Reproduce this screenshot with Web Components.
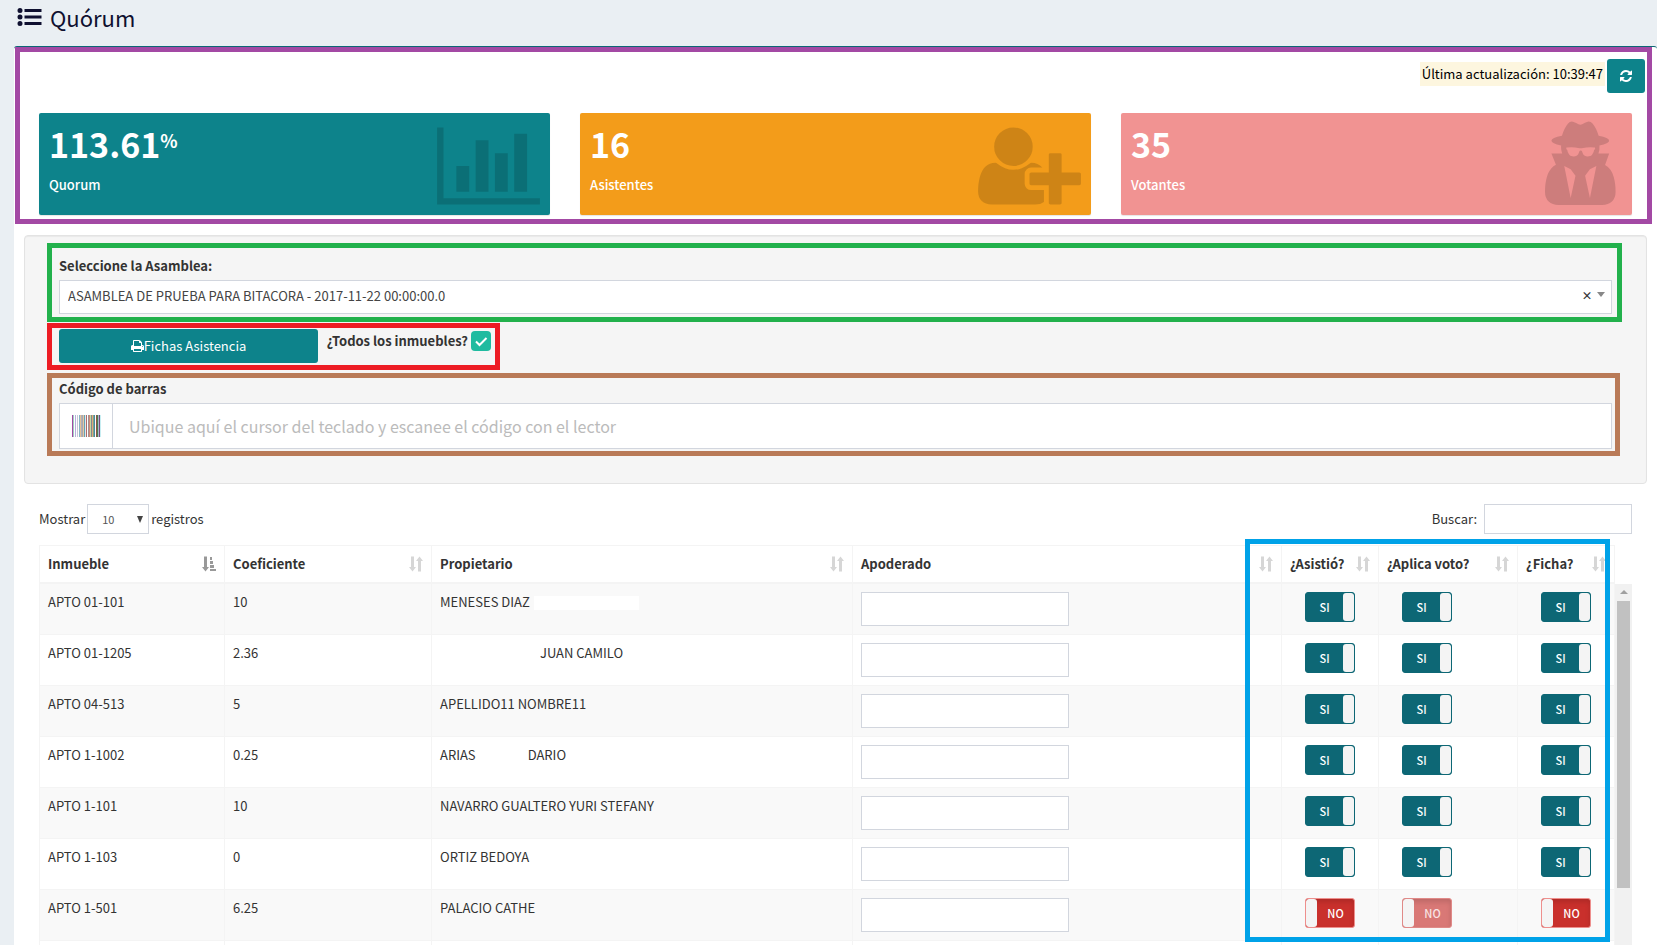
<!DOCTYPE html>
<html lang="es">
<head>
<meta charset="utf-8">
<meta name="viewport" content="width=device-width, initial-scale=1">
<title>Quórum</title>
<style>
  body {
    margin: 0;
    background: #eaeff3;
    color: #333;
    font: 13px/20px "Noto Sans CJK SC", "Source Sans Pro", sans-serif;
  }
</style>
</head>
<body>
<quorum-app></quorum-app>

<script>
const define = (name, html, setup) => {
  const template = document.createElement('template');
  template.innerHTML = html;
  customElements.define(name, class extends HTMLElement {
    constructor() {
      super();
      this.attachShadow({ mode: 'open' }).append(template.content.cloneNode(true));
    }
    connectedCallback() {
      if (setup && !this.ready) { this.ready = true; setup(this, this.shadowRoot); }
    }
  });
};

/* Icons: viewBox and path per name */
const ICONS = {
  chart: ['0 0 2048 1792', 'M640 896v512h-256v-512h256zm384-512v1024h-256v-1024h256zm1024 1152v128h-2048v-1536h128v1408h1920zm-640-896v768h-256v-768h256zm384-384v1152h-256v-1152h256z'],
  userplus: ['0 0 2048 1792', 'M704 896q-159 0-271.500-112.500t-112.500-271.500 112.500-271.500 271.500-112.500 271.500 112.500 112.500 271.500-112.500 271.500-271.500 112.500zm960 128h352q13 0 22.500 9.500t9.500 22.500v192q0 13-9.500 22.500t-22.500 9.500h-352v352q0 13-9.500 22.500t-22.500 9.500h-192q-13 0-22.500-9.500t-9.500-22.500v-352h-352q-13 0-22.500-9.500t-9.500-22.500v-192q0-13 9.500-22.500t22.500-9.500h352v-352q0-13 9.500-22.500t22.500-9.500h192q13 0 22.500 9.500t9.500 22.500v352zm-736 224q0 52 38 90t90 38h256v238q-68 50-171 50h-874q-121 0-194-69t-73-190q0-53 3.500-103.500t14-109 26.500-108.500 43-97.500 62-81 85.500-53.500 111.500-20q19 0 39 17 79 61 154.500 91.500t164.500 30.500 164.500-30.500 154.500-91.500q20-17 39-17 132 0 217 96h-223q-52 0-90 38t-38 90v192z'],
  secret: ['192 0 1536 1792', 'M704 1536l96-448-96-128-128-64zm384 0l128-640-128 64-96 128zm104-1001q-2-4-4-6-10-8-96-8-70 0-167 19-7 2-21 2t-21-2q-97-19-167-19-86 0-96 8-2 2-4 6 2 18 4 27 2 3 7.500 6.500t7.500 10.500q2 4 7.500 20.500t7 20.500 7.500 17 8.500 17 9 14 12 13.500 14 9.500 17.500 8 20.500 4 24.500 2q36 0 59-12.500t32.500-30 14.500-34.500 11.500-29.500 17.500-12.500h12q11 0 17.500 12.500t11.500 29.500 14.500 34.500 32.500 30 59 12.500q13 0 24.500-2t20.500-4 17.500-8 14-9.500 12-13.500 9-14 8.500-17 7.500-17 7-20.500 7.500-20.500q2-7 7.500-10.500t7.500-6.500q2-9 4-27zm408 879q0 121-73 190t-194 69h-874q-121 0-194-69t-73-190q0-61 4.500-118t19-125.500 37.500-123.500 63.500-103.500 93.500-74.500l-90-220h214q-22-64-22-128 0-12 2-32-194-40-194-96 0-57 210-99 17-62 51.500-134t70.500-114q32-37 76-37 30 0 84 31t84 31 84-31 84-31q44 0 76 37 36 42 70.500 114t51.500 134q210 42 210 99 0 56-194 96 7 81-20 160h214l-82 225q63 33 107.500 96.500t65.500 143.500 29 151.500 8 148.500z'],
  refresh: ['128 128 1536 1536', 'M1639 1056q0 5-1 7-64 268-268 434.500t-478 166.500q-146 0-282.500-55t-243.500-157l-129 129q-19 19-45 19t-45-19-19-45v-448q0-26 19-45t45-19h448q26 0 45 19t19 45-19 45l-137 137q71 66 161 102t187 36q134 0 250-65t186-179q11-17 53-117 8-23 30-23h192q13 0 22.500 9.500t9.500 22.500zm25-800v448q0 26-19 45t-45 19h-448q-26 0-45-19t-19-45 19-45l138-138q-148-137-349-137-134 0-250 65t-186 179q-11 17-53 117-8 23-30 23h-199q-13 0-22.500-9.500t-9.500-22.500v-7q65-268 270-434.500t480-166.500q146 0 284 55.500t245 156.500l130-129q19-19 45-19t45 19 19 45z'],
  print: ['64 128 1664 1536', 'M448 1536h896v-256h-896v256zm0-640h896v-384h-160q-40 0-68-28t-28-68v-160h-640v640zm1152 64q0-26-19-45t-45-19-45 19-19 45 19 45 45 19 45-19 19-45zm128 0v416q0 13-9.500 22.500t-22.500 9.500h-224v160q0 40-28 68t-68 28h-960q-40 0-68-28t-28-68v-160h-224q-13 0-22.500-9.500t-9.500-22.500v-416q0-79 56.500-135.500t135.500-56.500h64v-544q0-40 28-68t68-28h672q40 0 88 20t76 48l152 152q28 28 48 76t20 88v256h64q79 0 135.500 56.500t56.500 135.500z'],
  list: ['0 0 25 20', 'M3 1a2.500 2.500 0 1 1 0 5a2.500 2.500 0 1 1 0-5zM3 7.500a2.500 2.500 0 1 1 0 5a2.500 2.500 0 1 1 0-5zM3 14a2.500 2.500 0 1 1 0 5a2.500 2.500 0 1 1 0-5zM7.500 2h17v3h-17zM7.500 8.500h17v3h-17zM7.500 15h17v3h-17z'],
  sort: ['0 0 14 16', 'M2 0.500h3v10.500h2L3.500 15.500L0 11h2zM9 15.500h3V5h2L10.500 0.500L7 5h2z'],
  sortasc: ['0 0 14 16', 'M2 0.500h3v10.500h2L3.500 15.500L0 11h2zM8 1h2v3h-2zM8 5h3v3h-3zM8 9h4v3h-4zM8 13h6v2h-6z']
};
define('q-icon', `
<style>
  :host { display: inline-block; flex: none; }
  svg { display: block; width: 100%; height: 100%; fill: currentColor; }
</style>
<svg aria-hidden="true"><path/></svg>`, (host, root) => {
  const [box, d] = ICONS[host.getAttribute('name')];
  root.querySelector('svg').setAttribute('viewBox', box);
  root.querySelector('path').setAttribute('d', d);
});

/* Coloured frame that groups one area of the screen */
define('area-frame', `
<style>
  :host { display: block; box-sizing: border-box; border: 5px solid var(--frame, #a349a4); }
</style>
<slot></slot>`);

define('stat-card', `
<style>
  :host {
    display: flex; justify-content: space-between; align-items: flex-start;
    box-sizing: border-box; padding: 8px 10px 4px; border-radius: 2px;
    background: var(--tone); color: #fff; box-shadow: 0 1px 1px rgba(0,0,0,.1);
  }
  .value { margin: 2px 0 0; font-size: 34px; line-height: 42px; font-weight: 700; display: flex; }
  ::slotted(sup) { font-size: 18px; line-height: 34px; vertical-align: top; }
  p { margin: 9px 0 0; font-size: 13px; line-height: 22px; font-weight: 500; }
  q-icon { height: 90px; color: rgba(0,0,0,.15); }
</style>
<div><h3 class="value"><slot></slot></h3><p></p></div>`, (host, root) => {
  root.querySelector('p').textContent = host.getAttribute('label');
  const icon = document.createElement('q-icon');
  icon.setAttribute('name', host.getAttribute('icon'));
  icon.style.width = host.getAttribute('icon') === 'secret' ? '77px' : '103px';
  root.append(icon);
});

define('toggle-switch', `
<style>
  :host { display: block; width: 50px; }
  label {
    position: relative; display: flex; box-sizing: border-box; width: 50px; height: 30px;
    border: 1px solid #0d6775; border-radius: 3px; overflow: hidden;
    background: #0d6775; color: #fff; font-size: 11px; line-height: 28px; font-weight: 500;
  }
  input { position: absolute; inset: 0; width: 100%; height: 100%; margin: 0; opacity: 0; }
  span { flex: 1; text-align: center; }
  i { width: 11px; background: #f4f4f4; border-radius: 3px; }
  :host([off]) label { flex-direction: row-reverse; background: #c9302c; border-color: #ee8f8d; }
  :host([off]) label { box-shadow: inset 0 3px 5px rgba(0,0,0,.125); }
  :host([disabled]) label { background: #d97876; border-color: #e08a88; }
  :host([disabled]) span { color: #f8e4e4; }
</style>
<label><input type="checkbox" role="switch"><span></span><i></i></label>`, (host, root) => {
  const off = host.hasAttribute('off');
  root.querySelector('input').checked = !off;
  root.querySelector('input').disabled = host.hasAttribute('disabled');
  root.querySelector('span').textContent = off ? 'NO' : 'SI';
});

define('quorum-summary', `
<style>
  :host { display: block; }
  .update { display: flex; justify-content: flex-end; align-items: flex-start; gap: 2px; padding: 7px 2px 20px; }
  .time { margin-top: 3px; padding: 2px; background: #fdf6df; color: #000; line-height: 20px; }
  button {
    display: grid; place-items: center; width: 38px; height: 34px; padding: 0;
    border: 0; border-radius: 3px; background: #0d838b; color: #fff;
  }
  button q-icon { width: 12px; height: 12px; }
  .cards { display: grid; grid-template-columns: repeat(3, 1fr); gap: 30px; padding: 0 15px 4px 19px; }
</style>
<area-frame>
  <div class="update">
    <span class="time">Última actualización: 10:39:47</span>
    <button type="button" aria-label="Actualizar"><q-icon name="refresh"></q-icon></button>
  </div>
  <div class="cards">
    <stat-card style="--tone:#0d838b" label="Quorum" icon="chart">113.61<sup>%</sup></stat-card>
    <stat-card style="--tone:#f39c1a" label="Asistentes" icon="userplus">16</stat-card>
    <stat-card style="--tone:#f19392" label="Votantes" icon="secret">35</stat-card>
  </div>
</area-frame>`);

define('attendance-form', `
<style>
  :host {
    display: block; padding: 7px 24px 27px 22px; border: 1px solid #e3e3e3; border-radius: 4px;
    background: #f5f5f5; box-shadow: inset 0 1px 1px rgba(0,0,0,.05);
  }
  .assembly { --frame: #22b14c; padding: 7px 5px 3px 7px; margin-bottom: 1px; }
  .sheets { --frame: #ed1c24; display: flex; width: 453px; padding: 1px 4px 2px 7px; margin-bottom: 3px; }
  .barcode { --frame: #b97a57; padding: 0 3px 2px 7px; margin-right: 2px; }
  label { font-weight: 700; }
  .caption { display: block; line-height: 20px; padding: 1px 0 4px; }
  .select { display: flex; align-items: flex-start; height: 34px; box-sizing: border-box; padding: 0 6px 0 8px; border: 1px solid #d2d6de; background: #fff; }
  select {
    flex: 1; min-width: 0; height: 30px; padding: 0; border: 0; appearance: none;
    background: transparent; color: #444; font: inherit; line-height: 20px;
  }
  .clear { width: 20px; height: 28px; padding: 0; border: 0; background: none; color: #333; font: inherit; font-size: 11px; font-weight: 700; }
  .arrow { width: 8px; height: 5px; margin: 11px 0 0; color: #888; }
  .arrow svg { display: block; }
  .print {
    display: flex; align-items: center; justify-content: center; width: 259px; height: 34px;
    border: 0; border-radius: 3px; background: #0d838b; color: #fff; font: inherit; padding: 0;
  }
  .print q-icon { width: 13px; height: 12px; }
  .all { flex: 1; display: flex; gap: 3px; justify-content: flex-end; align-items: flex-start; padding-top: 2px; }
  .check { appearance: none; flex: none; width: 20px; height: 20px; margin: 0; border-radius: 4px;
    background: #1fbba0 url('data:image/svg+xml,<svg xmlns="http://www.w3.org/2000/svg" viewBox="0 0 20 20"><path d="M5 10.500l3.500 3.500L15.500 7" fill="none" stroke="white" stroke-width="2"/></svg>'); }
  .group { display: flex; height: 46px; box-sizing: border-box; border: 1px solid #d2d6de; background: #fff; }
  .addon { display: grid; place-items: center; width: 52px; border-right: 1px solid #d2d6de; }
  .group input { flex: 1; min-width: 0; border: 0; padding: 0 16px; background: none; font: inherit; font-size: 16px; outline: 0; }
  .group input::placeholder { color: #bbb; opacity: 1; }
</style>
<area-frame class="assembly">
  <label class="caption" for="assembly">Seleccione la Asamblea:</label>
  <div class="select">
    <select id="assembly"><option>ASAMBLEA DE PRUEBA PARA BITACORA - 2017-11-22 00:00:00.0</option></select>
    <button class="clear" type="button" aria-label="Quitar selección">×</button>
    <span class="arrow"><svg width="8" height="5" aria-hidden="true"><path d="M0 0h8L4 5z" fill="#888"/></svg></span>
  </div>
</area-frame>
<area-frame class="sheets">
  <button class="print" type="button"><q-icon name="print"></q-icon>Fichas Asistencia</button>
  <div class="all"><label for="all">¿Todos los inmuebles?</label><input class="check" id="all" type="checkbox" checked></div>
</area-frame>
<area-frame class="barcode">
  <label class="caption" for="code">Código de barras</label>
  <div class="group">
    <span class="addon"><svg width="29" height="22" aria-hidden="true"></svg></span>
    <input id="code" type="text" placeholder="Ubique aquí el cursor del teclado y escanee el código con el lector">
  </div>
</area-frame>`, (host, root) => {
  const bars = ['#a349a4', '#9fd0c0', '#fff', '#b7b0dd', '#fff', '#c8c8d8', '#fff', '#86b6c4', '#e2c29a', '#b0b0b8',
    '#a8a8b0', '#e6c8a0', '#6aa0b4', '#d8ecee', '#b06a6a', '#fff', '#a09090', '#d08a78', '#c4d8a0', '#808a90',
    '#e0a878', '#7aa890', '#4c88a0', '#fff', '#8a5a40', '#507a50', '#a8b8c8', '#7a4a80', '#c8eef2'];
  root.querySelector('.addon svg').innerHTML =
    bars.map((c, x) => `<rect x="${x}" width="1" height="22" fill="${c}"/>`).join('');
});

const ROWS = [
  ['APTO 01-101', '10', 'MENESES DIAZ<span class="blank"></span>'],
  ['APTO 01-1205', '2.36', '<span class="gap" style="width:100px"></span>JUAN CAMILO'],
  ['APTO 04-513', '5', 'APELLIDO11 NOMBRE11'],
  ['APTO 1-1002', '0.25', 'ARIAS<span class="gap" style="width:52px"></span>DARIO'],
  ['APTO 1-101', '10', 'NAVARRO GUALTERO YURI STEFANY'],
  ['APTO 1-103', '0', 'ORTIZ BEDOYA'],
  ['APTO 1-501', '6.25', 'PALACIO CATHE', 'off']
];
define('quorum-table', `
<style>
  :host { display: flex; flex-direction: column; min-height: 0; padding: 0 25px; }
  .tools { display: flex; justify-content: space-between; align-items: center; height: 30px; padding-bottom: 11px; }
  .tools label { display: flex; align-items: center; gap: 2px; }
  .tools .search { gap: 7px; }
  input[type=text], input[type=search], select {
    box-sizing: border-box; border: 1px solid #d2d6de; background: #fff; color: #555; font: inherit; border-radius: 0; appearance: none;
  }
  .search input { width: 148px; height: 30px; }
  .length span { display: grid; grid-template-columns: 62px; align-items: center; }
  select { grid-area: 1/1; width: 62px; height: 30px; padding: 0 14px; font-size: 11px; }
  .length svg { grid-area: 1/1; justify-self: end; margin-right: 6px; pointer-events: none; }
  .view { position: relative; flex: 1; display: flex; min-height: 0; overflow: clip; overflow-clip-margin: 10px; }
  table { flex: 1; align-self: flex-start; table-layout: fixed; border-collapse: separate; border-spacing: 0; border-left: 1px solid #f4f4f4; border-top: 1px solid #f4f4f4; }
  th, td { box-sizing: border-box; border-right: 1px solid #f4f4f4; border-bottom: 1px solid #f4f4f4; padding: 8px; text-align: left; vertical-align: top; }
  th { height: 38px; border-bottom-width: 2px; }
  th div { display: flex; justify-content: space-between; align-items: center; height: 20px; white-space: nowrap; }
  th q-icon { width: 14px; height: 16px; color: #d6d6d6; }
  th q-icon[name=sortasc] { color: #999; }
  td { height: 51px; }
  tbody tr:nth-child(odd) td { background: #f9f9f9; }
  td toggle-switch { margin-left: 15px; }
  td input { display: block; width: 208px; height: 34px; }
  .gap, .blank { display: inline-block; }
  .blank { width: 105px; height: 14px; margin-left: 4px; background: #fff; vertical-align: middle; }
  .bar { width: 17px; margin-top: 39px; padding-top: 6px; box-sizing: border-box; background: #f1f1f1; }
  .bar svg { display: block; margin: 0 auto 7px; }
  .bar i { display: block; width: 13px; height: 287px; margin: 0 auto; background: #c1c1c1; }
  .flags { position: absolute; top: -6px; right: 22px; width: 365px; height: 403px; pointer-events: none; --frame: #00a2e8; }
</style>
<div class="tools">
  <label class="length">Mostrar
    <span><select><option>10</option></select><svg width="6" height="7" aria-hidden="true"><path d="M0 0h6L3 7z" fill="#444"/></svg></span>
    registros</label>
  <label class="search">Buscar: <input type="search"></label>
</div>
<div class="view">
  <table>
    <colgroup><col style="width:185px"><col style="width:207px"><col style="width:421px"><col><col style="width:97px"><col style="width:139px"><col style="width:97px"></colgroup>
    <thead><tr></tr></thead>
    <tbody></tbody>
  </table>
  <div class="bar" aria-hidden="true"><svg width="8" height="4"><path d="M4 0l4 4H0z" fill="#a0a0a0"/></svg><i></i></div>
  <area-frame class="flags"></area-frame>
</div>`, (host, root) => {
  root.querySelector('thead tr').innerHTML =
    ['Inmueble', 'Coeficiente', 'Propietario', 'Apoderado', '¿Asistió?', '¿Aplica voto?', '¿Ficha?']
      .map((t, i) => `<th scope="col"><div>${t}<q-icon name="${i ? 'sort' : 'sortasc'}"></q-icon></div></th>`).join('');
  root.querySelector('tbody').innerHTML = ROWS.map(([unit, share, owner, off = '']) => `
    <tr><td>${unit}</td><td>${share}</td><td>${owner}</td>
    <td><input type="text" aria-label="Apoderado"></td>
    <td><toggle-switch ${off}></toggle-switch></td>
    <td><toggle-switch ${off} ${off && 'disabled'}></toggle-switch></td>
    <td><toggle-switch ${off}></toggle-switch></td></tr>`).join('') + '<tr>' + '<td></td>'.repeat(7) + '</tr>';
});

define('quorum-app', `
<style>
  :host { display: flex; flex-direction: column; height: 100vh; overflow: hidden; }
  h1 { display: flex; align-items: center; gap: 8px; margin: 0; padding: 2px 17px 14px; font-size: 22px; line-height: 30px; font-weight: 400; color: #0f1030; }
  h1 q-icon { width: 25px; height: 20px; }
  main { flex: 1; display: flex; flex-direction: column; min-height: 0; margin-left: 14px; background: #fff; border-top: 1px solid #0d6775; border-radius: 3px 3px 0 0; }
  quorum-summary { margin: 0 5px 11px 1px; }
  attendance-form { margin: 0 10px 20px; }
  quorum-table { flex: 1; }
</style>
<h1><q-icon name="list"></q-icon>Quórum</h1>
<main>
  <quorum-summary></quorum-summary>
  <attendance-form></attendance-form>
  <quorum-table></quorum-table>
</main>`);
</script>
</body>
</html>
